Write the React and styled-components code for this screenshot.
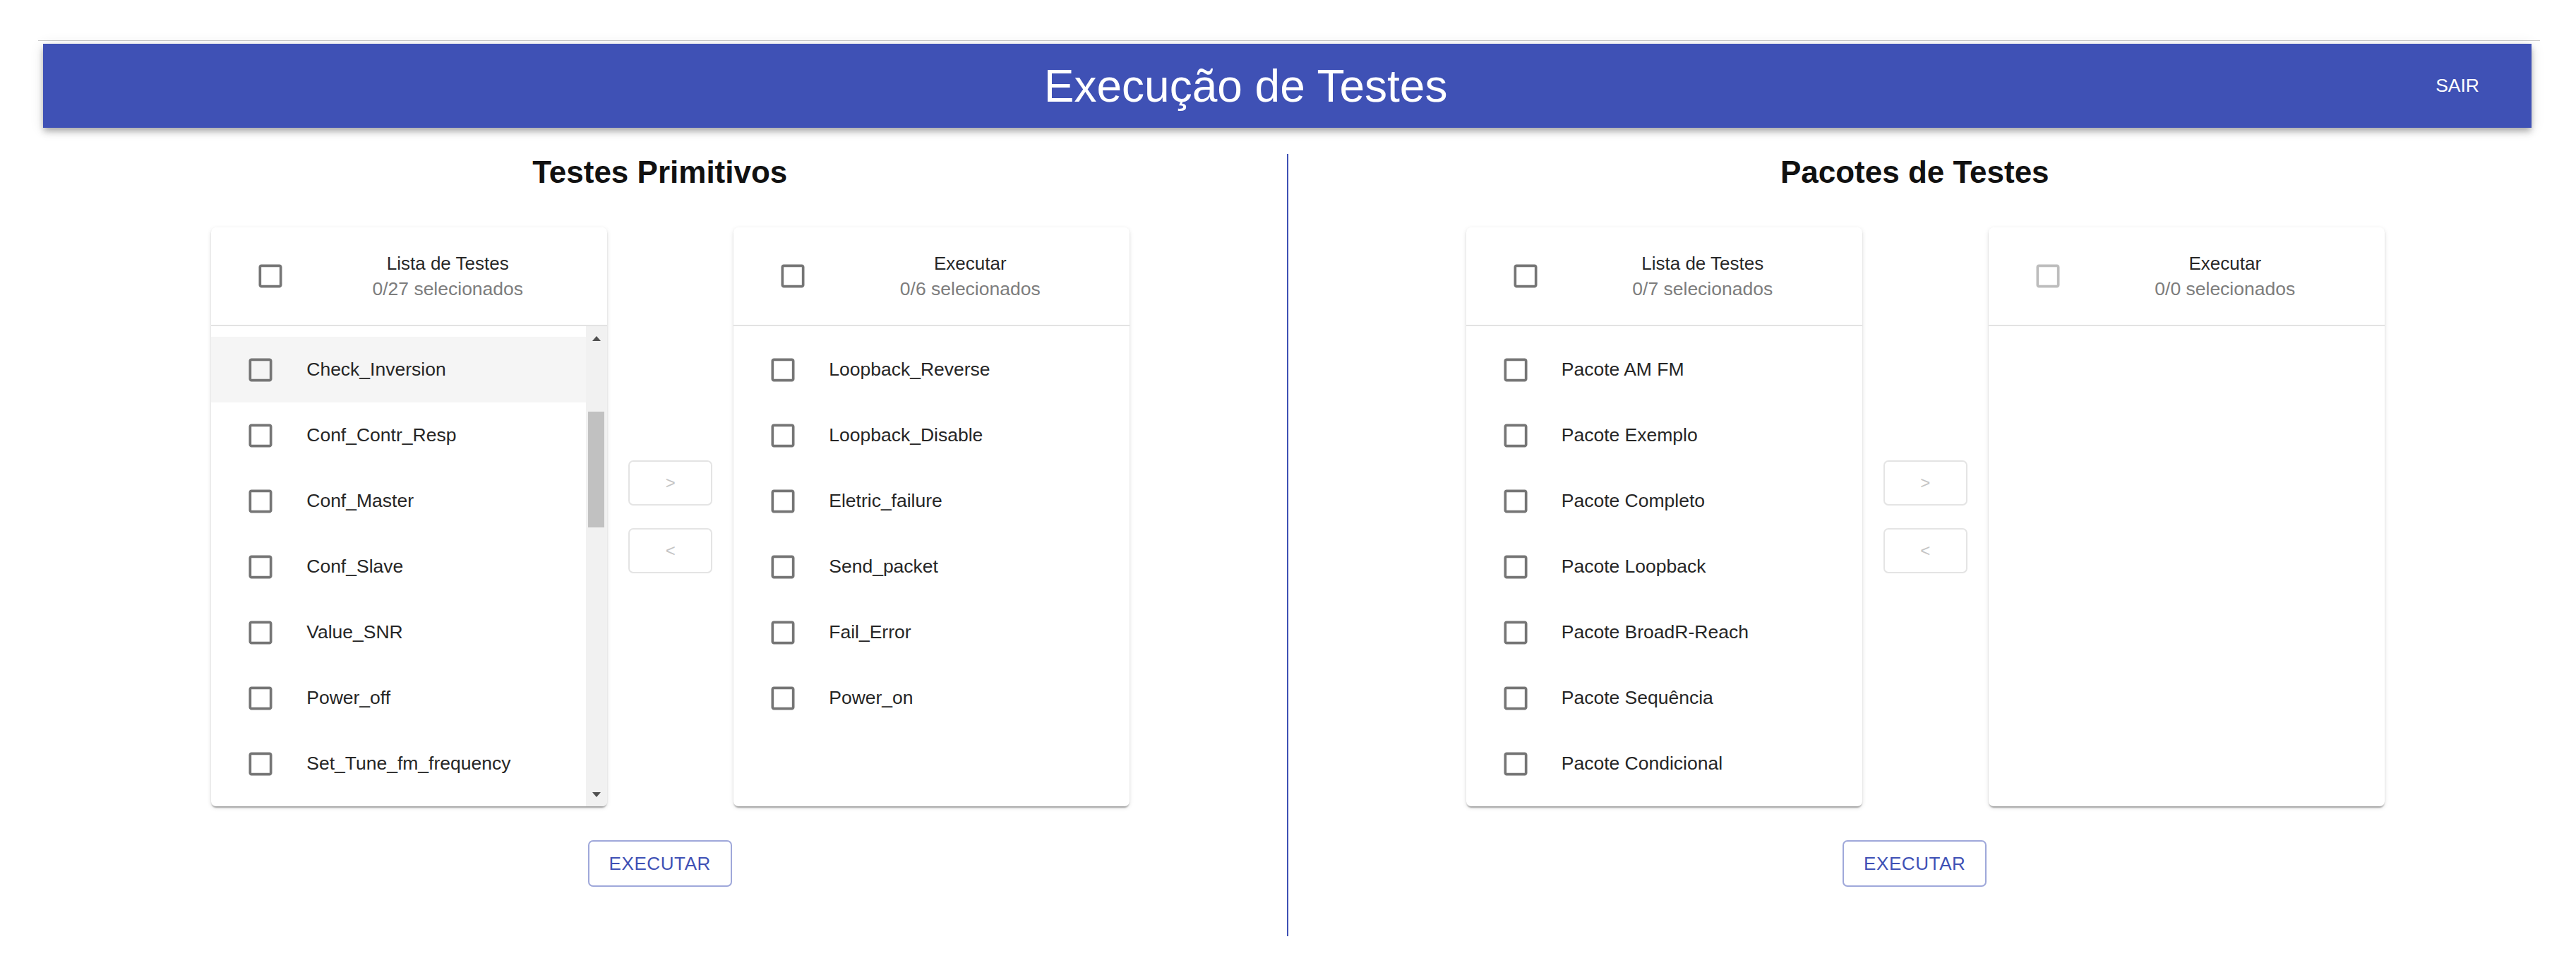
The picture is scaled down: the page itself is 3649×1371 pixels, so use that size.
import React from 'react';
import styled, { createGlobalStyle } from 'styled-components';

const GlobalStyle = createGlobalStyle`
  *, *::before, *::after { box-sizing: border-box; }
  body {
    margin: 0;
    background: #fff;
    font-family: "Liberation Sans", Arial, sans-serif;
  }
`;

const Shell = styled.div`
  margin: 57px 51px 0 54px;
  padding: 0 12px 0 7px;
  border-top: 1px solid #cacaca;
`;

const AppBar = styled.header`
  margin-top: 4px;
  height: 119px;
  display: flex;
  align-items: center;
  padding: 0 59px 0 33px;
  background: #3f51b5;
  color: #fff;
  box-shadow: 0 4px 8px -2px rgba(0, 0, 0, 0.2), 0 7px 9px 0 rgba(0, 0, 0, 0.14),
    0 2px 18px 0 rgba(0, 0, 0, 0.12);
`;

const AppTitle = styled.h1`
  flex: 1;
  margin: 0;
  text-align: center;
  font-size: 64px;
  font-weight: 400;
  line-height: 1;
`;

const SairButton = styled.button`
  background: none;
  border: none;
  color: #fff;
  font-family: inherit;
  font-size: 26.5px;
  padding: 11px 15px;
  text-transform: uppercase;
  cursor: pointer;
`;

const Main = styled.main`
  display: flex;
  margin-top: 37px;
`;

const Column = styled.section`
  flex: 1;
  display: flex;
  flex-direction: column;
  align-items: center;
  padding-bottom: 70px;
`;

const Divider = styled.div`
  width: 2px;
  margin: 0 14px;
  background: #3f51b5;
`;

const Heading = styled.h2`
  margin: 0;
  font-size: 44px;
  line-height: 52px;
  font-weight: 700;
  color: #111;
`;

const TransferGrid = styled.div`
  display: flex;
  align-items: center;
  gap: 30px;
  margin: 52px 0 0 30px;
`;

const Card = styled.div`
  width: 561px;
  height: 820px;
  display: flex;
  flex-direction: column;
  background: #fff;
  border-radius: 7px;
  overflow: hidden;
  box-shadow: 0 4px 2px -2px rgba(0, 0, 0, 0.2), 0 2px 2px 0 rgba(0, 0, 0, 0.14),
    0 2px 6px 0 rgba(0, 0, 0, 0.12);
`;

const CardHead = styled.div`
  height: 140px;
  display: flex;
  align-items: center;
  padding: 0 30px 0 62px;
  border-bottom: 2px solid #e3e3e3;
`;

const HeadText = styled.div`
  flex: 1;
  margin-left: 33px;
  text-align: center;
`;

const HeadTitle = styled.div`
  font-size: 26px;
  line-height: 36px;
  color: rgba(0, 0, 0, 0.87);
`;

const HeadSub = styled.div`
  font-size: 26.5px;
  line-height: 36px;
  color: #7d7d7d;
`;

const ListBody = styled.div`
  flex: 1;
  display: flex;
  min-height: 0;
`;

const Rows = styled.ul`
  flex: 1;
  margin: 0;
  padding: 15px 0 0;
  list-style: none;
  overflow: hidden;
`;

const Row = styled.li`
  height: 93px;
  display: flex;
  align-items: center;
  padding-left: 48px;
  background: ${(p) => (p.$hover ? '#f5f5f5' : 'transparent')};
`;

const RowLabel = styled.span`
  margin-left: 43px;
  font-size: 26.5px;
  color: #262626;
  white-space: nowrap;
`;

const ScrollBar = styled.div`
  width: 30px;
  display: flex;
  flex-direction: column;
  background: #f1f1f1;
`;

const ScrollArrow = styled.div`
  height: 34px;
  display: flex;
  align-items: center;
  justify-content: center;

  &::before {
    content: '';
    border-left: 6px solid transparent;
    border-right: 6px solid transparent;
    ${(p) => (p.$down ? 'border-top' : 'border-bottom')}: 7px solid #505050;
  }
`;

const ScrollTrack = styled.div`
  flex: 1;
`;

const Thumb = styled.div`
  height: 164px;
  margin: 87px 4px 0 3px;
  background: #c1c1c1;
`;

const MoveColumn = styled.div`
  display: flex;
  flex-direction: column;
  gap: 32px;
  width: 119px;
`;

const MoveButton = styled.button`
  height: 64px;
  background: #fff;
  border: 2px solid #e4e4e4;
  border-radius: 7px;
  color: #c4c4c4;
  font-family: inherit;
  font-size: 24px;
`;

const RunButton = styled.button`
  margin-top: 48px;
  width: 204px;
  height: 66px;
  background: #fff;
  border: 2px solid rgba(63, 81, 181, 0.5);
  border-radius: 7px;
  color: #3f51b5;
  font-family: inherit;
  font-size: 26px;
  letter-spacing: 0.6px;
  text-transform: uppercase;
  cursor: pointer;
`;

const BoxIcon = styled.svg`
  width: 44px;
  height: 44px;
  flex: none;
  fill: ${(p) => (p.$disabled ? '#bdbdbd' : '#757575')};
`;

function CheckBox({ disabled }) {
  return (
    <BoxIcon viewBox="0 0 24 24" $disabled={disabled}>
      <path d="M19 5v14H5V5h14m0-2H5c-1.11 0-2 .9-2 2v14c0 1.1.89 2 2 2h14c1.1 0 2-.9 2-2V5c0-1.1-.9-2-2-2z" />
    </BoxIcon>
  );
}

function ListCard({ title, items, total, scroll }) {
  return (
    <Card>
      <CardHead>
        <CheckBox disabled={total === 0} />
        <HeadText>
          <HeadTitle>{title}</HeadTitle>
          <HeadSub>0/{total} selecionados</HeadSub>
        </HeadText>
      </CardHead>
      <ListBody>
        <Rows>
          {items.map((item, i) => (
            <Row key={item} $hover={scroll && i === 0}>
              <CheckBox />
              <RowLabel>{item}</RowLabel>
            </Row>
          ))}
        </Rows>
        {scroll && (
          <ScrollBar>
            <ScrollArrow />
            <ScrollTrack>
              <Thumb />
            </ScrollTrack>
            <ScrollArrow $down />
          </ScrollBar>
        )}
      </ListBody>
    </Card>
  );
}

const primitivos = [
  'Check_Inversion',
  'Conf_Contr_Resp',
  'Conf_Master',
  'Conf_Slave',
  'Value_SNR',
  'Power_off',
  'Set_Tune_fm_frequency',
];

const executarPrim = [
  'Loopback_Reverse',
  'Loopback_Disable',
  'Eletric_failure',
  'Send_packet',
  'Fail_Error',
  'Power_on',
];

const pacotes = [
  'Pacote AM FM',
  'Pacote Exemplo',
  'Pacote Completo',
  'Pacote Loopback',
  'Pacote BroadR-Reach',
  'Pacote Sequência',
  'Pacote Condicional',
];

function TransferSection({ heading, left, leftTotal, right, scroll }) {
  return (
    <Column>
      <Heading>{heading}</Heading>
      <TransferGrid>
        <ListCard title="Lista de Testes" items={left} total={leftTotal} scroll={scroll} />
        <MoveColumn>
          <MoveButton disabled>&gt;</MoveButton>
          <MoveButton disabled>&lt;</MoveButton>
        </MoveColumn>
        <ListCard title="Executar" items={right} total={right.length} />
      </TransferGrid>
      <RunButton>Executar</RunButton>
    </Column>
  );
}

export default function App() {
  return (
    <>
      <GlobalStyle />
      <Shell>
        <AppBar>
          <AppTitle>Execução de Testes</AppTitle>
          <SairButton>Sair</SairButton>
        </AppBar>
        <Main>
          <TransferSection
            heading="Testes Primitivos"
            left={primitivos}
            leftTotal={27}
            right={executarPrim}
            scroll
          />
          <Divider />
          <TransferSection
            heading="Pacotes de Testes"
            left={pacotes}
            leftTotal={pacotes.length}
            right={[]}
          />
        </Main>
      </Shell>
    </>
  );
}
